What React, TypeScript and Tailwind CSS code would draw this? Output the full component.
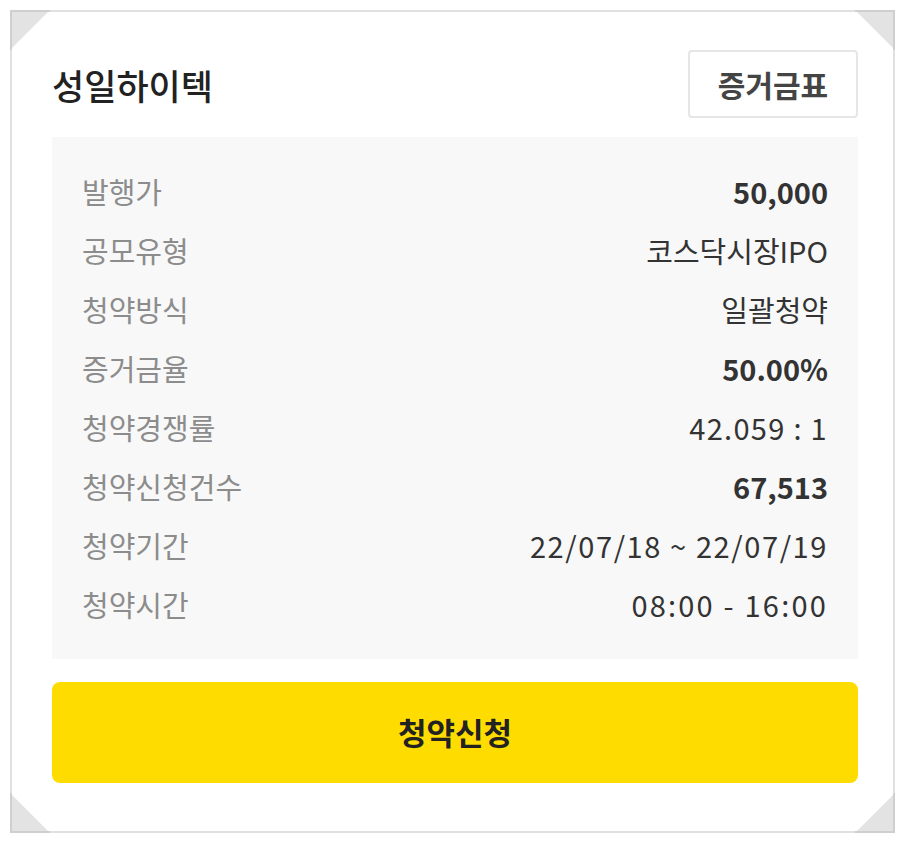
import React from "react";

const rows: { label: string; value: string; bold?: boolean; track?: string }[] = [
  { label: "발행가", value: "50,000", bold: true },
  { label: "공모유형", value: "코스닥시장IPO" },
  { label: "청약방식", value: "일괄청약" },
  { label: "증거금율", value: "50.00%", bold: true },
  { label: "청약경쟁률", value: "42.059 : 1", track: "tracking-[1.3px]" },
  { label: "청약신청건수", value: "67,513", bold: true },
  { label: "청약기간", value: "22/07/18 ~ 22/07/19", track: "tracking-[1.6px]" },
  { label: "청약시간", value: "08:00 - 16:00", track: "tracking-[2.2px]" },
];

function Corner({ pos }: { pos: "tl" | "tr" | "bl" | "br" }) {
  const cls =
    pos === "tl"
      ? "top-[-2px] left-[-2px]"
      : pos === "tr"
      ? "top-[-2px] right-[-2px]"
      : pos === "bl"
      ? "bottom-[-2px] left-[-2px]"
      : "bottom-[-2px] right-[-2px]";
  const pts =
    pos === "tl"
      ? "0,0 40,0 0,40"
      : pos === "tr"
      ? "0,0 40,0 40,40"
      : pos === "bl"
      ? "0,0 40,40 0,40"
      : "40,0 40,40 0,40";
  const edge =
    pos === "tl"
      ? "M1,40 L1,1 L40,1"
      : pos === "tr"
      ? "M0,1 L39,1 L39,40"
      : pos === "bl"
      ? "M1,0 L1,39 L40,39"
      : "M39,0 L39,39 L0,39";
  return (
    <svg className={`absolute ${cls}`} width="40" height="40" viewBox="0 0 40 40">
      <polygon points={pts} fill="#e3e3e3" />
      <path d={edge} stroke="#cfcfcf" strokeWidth="2" fill="none" />
    </svg>
  );
}

export default function App() {
  return (
    <div
      className="w-[905px] h-[843px] bg-white p-[10px]"
      style={{ fontFamily: '"Noto Sans CJK KR", "Noto Sans", sans-serif' }}
    >
      <div className="relative h-full border-2 border-[#e0e0e0] bg-white pl-[40px] pr-[35px] pt-[38px]">
        <Corner pos="tl" />
        <Corner pos="tr" />
        <Corner pos="bl" />
        <Corner pos="br" />
        <div className="flex h-[68px] items-center justify-between">
          <h1 className="text-[35px] leading-none font-medium text-[#222]">성일하이텍</h1>
          <button className="flex h-[68px] w-[170px] items-center justify-center rounded-[4px] border-2 border-[#e6e6e6] bg-white text-[30px] leading-none font-bold text-[#444]">
            증거금표
          </button>
        </div>
        <div className="mt-[19px] bg-[#f8f8f8] px-[30px] py-[25px]">
          {rows.map((r) => (
            <div key={r.label} className="flex h-[59px] items-center justify-between">
              <span className="text-[29px] leading-none text-[#8c8c8c]">{r.label}</span>
              <span
                className={`text-[29px] leading-none text-[#333] ${r.bold ? "font-bold" : ""} ${r.track ?? ""}`}
              >
                {r.value}
              </span>
            </div>
          ))}
        </div>
        <button className="mt-[23px] flex h-[101px] w-full items-center justify-center rounded-[8px] bg-[#ffdc00] pb-[2px] text-[31px] leading-none font-bold text-[#222]">
          청약신청
        </button>
      </div>
    </div>
  );
}
